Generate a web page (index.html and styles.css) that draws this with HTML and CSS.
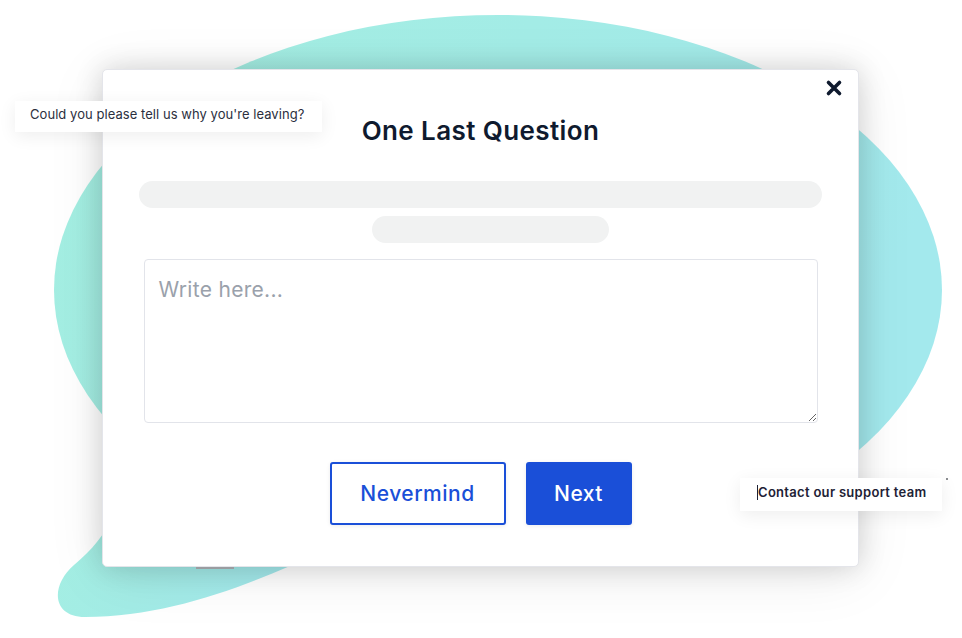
FILE: index.html
```html
<!DOCTYPE html>
<html lang="en">
<head>
<meta charset="utf-8">
<title>One Last Question</title>
<link rel="stylesheet" href="styles.css">
</head>
<body>
<div class="stage">
  <svg class="blob" width="962" height="638" viewBox="0 0 962 638" aria-hidden="true">
    <defs>
      <linearGradient id="tealGrad" x1="0" y1="0" x2="1" y2="0.3">
        <stop offset="0" stop-color="#a4efe1"/>
        <stop offset="0.5" stop-color="#a3ece6"/>
        <stop offset="1" stop-color="#a3e9ed"/>
      </linearGradient>
    </defs>
    <ellipse cx="498" cy="290" rx="444" ry="275" fill="url(#tealGrad)"/>
    <path d="M 130 470 C 118 520 98 545 74 565 C 50 586 52 617 85 617 C 160 617 230 592 290 566 L 330 480 Z" fill="url(#tealGrad)"/>
  </svg>

  <div class="modal">
    <button class="close" aria-label="Close">
      <svg width="18" height="18" viewBox="0 0 18 18"><path d="M3.5 3.5 L14.5 14.5 M14.5 3.5 L3.5 14.5" stroke="#0f1a2e" stroke-width="3.6" stroke-linecap="round"/></svg>
    </button>
    <h1 class="title">One Last Question</h1>
    <div class="pill pill-wide"></div>
    <div class="pill pill-short"></div>
    <textarea class="answer" placeholder="Write here..."></textarea>
    <div class="actions">
      <button class="btn btn-outline">Nevermind</button>
      <button class="btn btn-primary">Next</button>
    </div>
    <span class="stub"></span>
  </div>

  <div class="tip tip-left">Could you please tell us why you're leaving?</div>
  <div class="tip tip-right"><span class="caret"></span>Contact our support team</div>
  <span class="dot"></span>
</div>
</body>
</html>
```

FILE: styles.css
```css
html, body {
  margin: 0;
  padding: 0;
  background: #ffffff;
}

body {
  font-family: "Inter", "Noto Sans", "Liberation Sans", sans-serif;
  color: #0f1a2e;
}

.stage {
  position: relative;
  width: 962px;
  height: 638px;
  overflow: hidden;
  padding: 69px 0 0 102px;
  box-sizing: border-box;
}

.blob {
  position: absolute;
  left: 0;
  top: 0;
}

.modal {
  position: relative;
  width: 757px;
  height: 498px;
  box-sizing: border-box;
  background: #ffffff;
  border: 1px solid #e4e5ea;
  border-radius: 5px;
  box-shadow: 0 0 28px rgba(0, 0, 0, 0.16), 0 8px 60px rgba(0, 0, 0, 0.08);
  display: flex;
  flex-direction: column;
  align-items: center;
  padding: 0 36px 0 36px;
}

.close {
  position: absolute;
  top: 8px;
  right: 14px;
  width: 20px;
  height: 20px;
  padding: 0;
  border: 0;
  background: transparent;
  display: flex;
  align-items: center;
  justify-content: center;
}

.title {
  margin: 44px 0 0 0;
  height: 34px;
  line-height: 34px;
  font-size: 26px;
  font-weight: 600;
  letter-spacing: 0.4px;
  color: #0f1a2e;
}

.pill {
  background: #f1f2f2;
  border-radius: 14px;
  height: 27px;
}

.pill-wide {
  margin-top: 33px;
  width: 683px;
}

.pill-short {
  margin-top: 8px;
  margin-left: 19px;
  width: 237px;
}

.answer {
  margin-top: 16px;
  width: 674px;
  height: 164px;
  box-sizing: border-box;
  border: 1px solid #e2e4ea;
  border-radius: 4px;
  padding: 17px 14px;
  font-family: "Inter", "Noto Sans", "Liberation Sans", sans-serif;
  font-size: 21px;
  letter-spacing: 0.3px;
  color: #0f1a2e;
  resize: both;
  outline: none;
}

.answer::placeholder {
  color: #9aa1ab;
}

.actions {
  margin-top: 39px;
  display: flex;
  gap: 20px;
}

.btn {
  height: 63px;
  box-sizing: border-box;
  border-radius: 3px;
  font-family: "Inter", "Noto Sans", "Liberation Sans", sans-serif;
  font-size: 21px;
  font-weight: 500;
  letter-spacing: 0.5px;
  box-shadow: 0 1px 4px rgba(0, 0, 0, 0.08);
}

.btn-outline {
  width: 176px;
  background: #ffffff;
  border: 2px solid #1a4fd8;
  color: #1a4fd8;
}

.btn-primary {
  width: 106px;
  background: #1a4fd8;
  border: 0;
  color: #ffffff;
}

.stub {
  position: absolute;
  left: 93px;
  bottom: -3px;
  width: 38px;
  height: 2px;
  background: #9a9ca0;
}

.tip {
  position: absolute;
  background: #ffffff;
  box-shadow: 0 4px 18px rgba(0, 0, 0, 0.07);
  font-size: 13px;
  color: #2b2f3e;
  box-sizing: border-box;
  white-space: nowrap;
  display: flex;
  align-items: center;
}

.tip-left {
  left: 15px;
  top: 101px;
  width: 307px;
  height: 31px;
  padding-left: 15px;
  padding-bottom: 5px;
  letter-spacing: 0.05px;
}

.tip-right {
  left: 740px;
  top: 478px;
  width: 202px;
  height: 33px;
  padding-left: 17px;
  padding-bottom: 5px;
  font-weight: 600;
  color: #1e2235;
  letter-spacing: 0.3px;
}

.caret {
  display: inline-block;
  width: 1px;
  height: 15px;
  background: #1e2235;
  margin-right: 0;
}

.dot {
  position: absolute;
  left: 946px;
  top: 478px;
  width: 2px;
  height: 2px;
  background: #8a8c90;
}
```
